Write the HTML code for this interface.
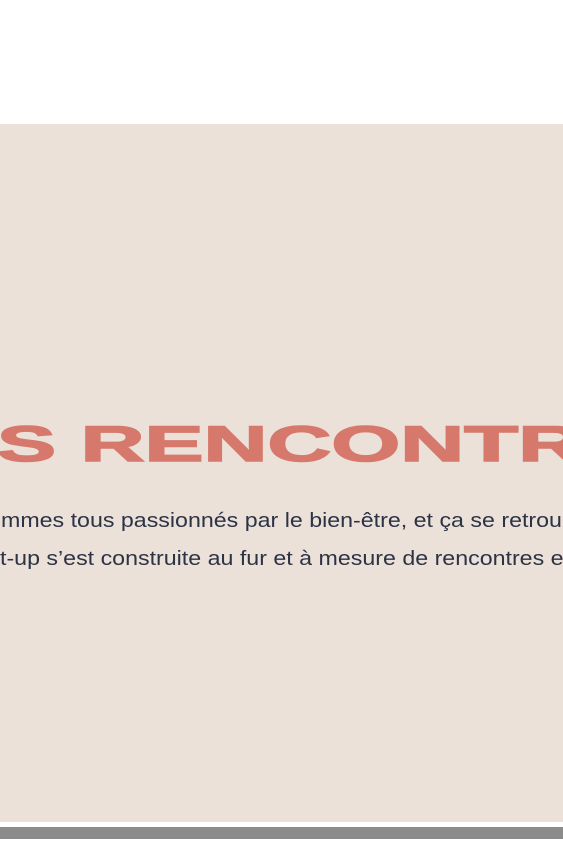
<!DOCTYPE html>
<html><head><meta charset="utf-8"><style>
html,body{margin:0;padding:0;width:563px;height:844px;overflow:hidden;background:#fff;font-family:"Liberation Sans",sans-serif}
.wrap{position:relative;width:563px;height:844px;overflow:hidden}
.bg{position:absolute;left:0;top:124px;width:563px;height:698px;background:#ece1d9}
.bar{position:absolute;left:0;top:827px;width:563px;height:12px;background:#8b8b8b}
.h{position:absolute;left:-3px;top:414px;font-weight:bold;font-size:50px;line-height:60px;color:#d6786b;white-space:nowrap;transform:scaleX(1.77);transform-origin:0 0;-webkit-text-stroke:1.5px #d6786b}
.p{position:absolute;left:1px;font-size:20px;color:#2c3345;white-space:nowrap;line-height:24px;transform:scaleX(1.16);transform-origin:0 0}
</style></head><body><div class="wrap">
<div class="bg"></div>
<div class="h">S RENCONTR</div>
<div class="p" style="top:509px">mmes tous passionnés par le bien-être, et ça se retrou</div>
<div class="p" style="top:547px;left:0">t-up s’est construite au fur et à mesure de rencontres e</div>
<div class="bar"></div>
</div></body></html>
